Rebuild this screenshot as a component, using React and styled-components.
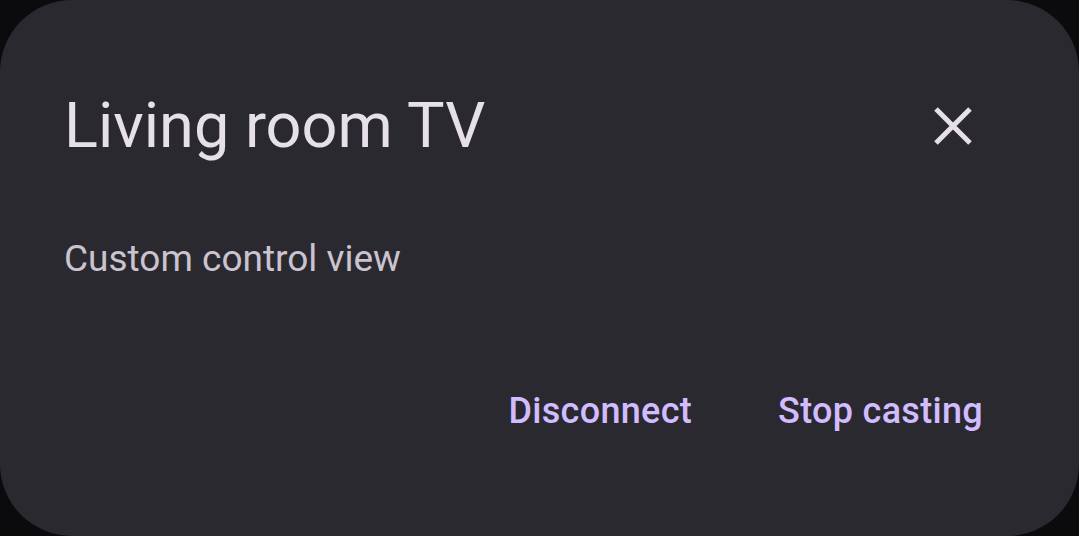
import styled, { createGlobalStyle } from "styled-components";

const GlobalStyle = createGlobalStyle`
    html, body {
        margin: 0;
        padding: 0;
        background: #0b0b0e;
        font-family: Roboto, "Noto Sans", sans-serif;
    }
`;

const Dialog = styled.div`
    box-sizing: border-box;
    width: 1079px;
    height: 536px;
    background: #2b2930;
    border-radius: 72px;
    padding: 82px 96px 0 64px;
    display: flex;
    flex-direction: column;
`;

const Header = styled.div`
    display: flex;
    align-items: center;
    justify-content: space-between;
`;

const Title = styled.h1`
    margin: 0;
    font-size: 63px;
    font-weight: 400;
    line-height: 88px;
    color: #e6e0e9;
`;

const CloseButton = styled.button`
    width: 48px;
    height: 48px;
    padding: 0;
    margin-right: 6px;
    border: none;
    background: none;
    display: flex;
    align-items: center;
    justify-content: center;
    color: #e6e0e9;
`;

const Subtitle = styled.p`
    margin: 0;
    margin-top: 64px;
    font-size: 37px;
    line-height: 50px;
    color: #cac4d0;
`;

const Actions = styled.div`
    margin-top: auto;
    margin-bottom: 100px;
    display: flex;
    justify-content: flex-end;
    gap: 86px;
`;

const TextButton = styled.button`
    padding: 0;
    border: none;
    background: none;
    font-family: Roboto, "Noto Sans", sans-serif;
    font-size: 36px;
    font-weight: 500;
    letter-spacing: 0.3px;
    line-height: 50px;
    color: #d0bcff;
`;

const App = () => {
    return (
        <>
            <GlobalStyle />
            <Dialog>
                <Header>
                    <Title>Living room TV</Title>
                    <CloseButton aria-label="Close">
                        <svg width="38" height="38" viewBox="0 0 38 38">
                            <path d="M2 2 L36 36 M36 2 L2 36" stroke="currentColor" strokeWidth="5" />
                        </svg>
                    </CloseButton>
                </Header>
                <Subtitle>Custom control view</Subtitle>
                <Actions>
                    <TextButton>Disconnect</TextButton>
                    <TextButton>Stop casting</TextButton>
                </Actions>
            </Dialog>
        </>
    );
};

export default App;
